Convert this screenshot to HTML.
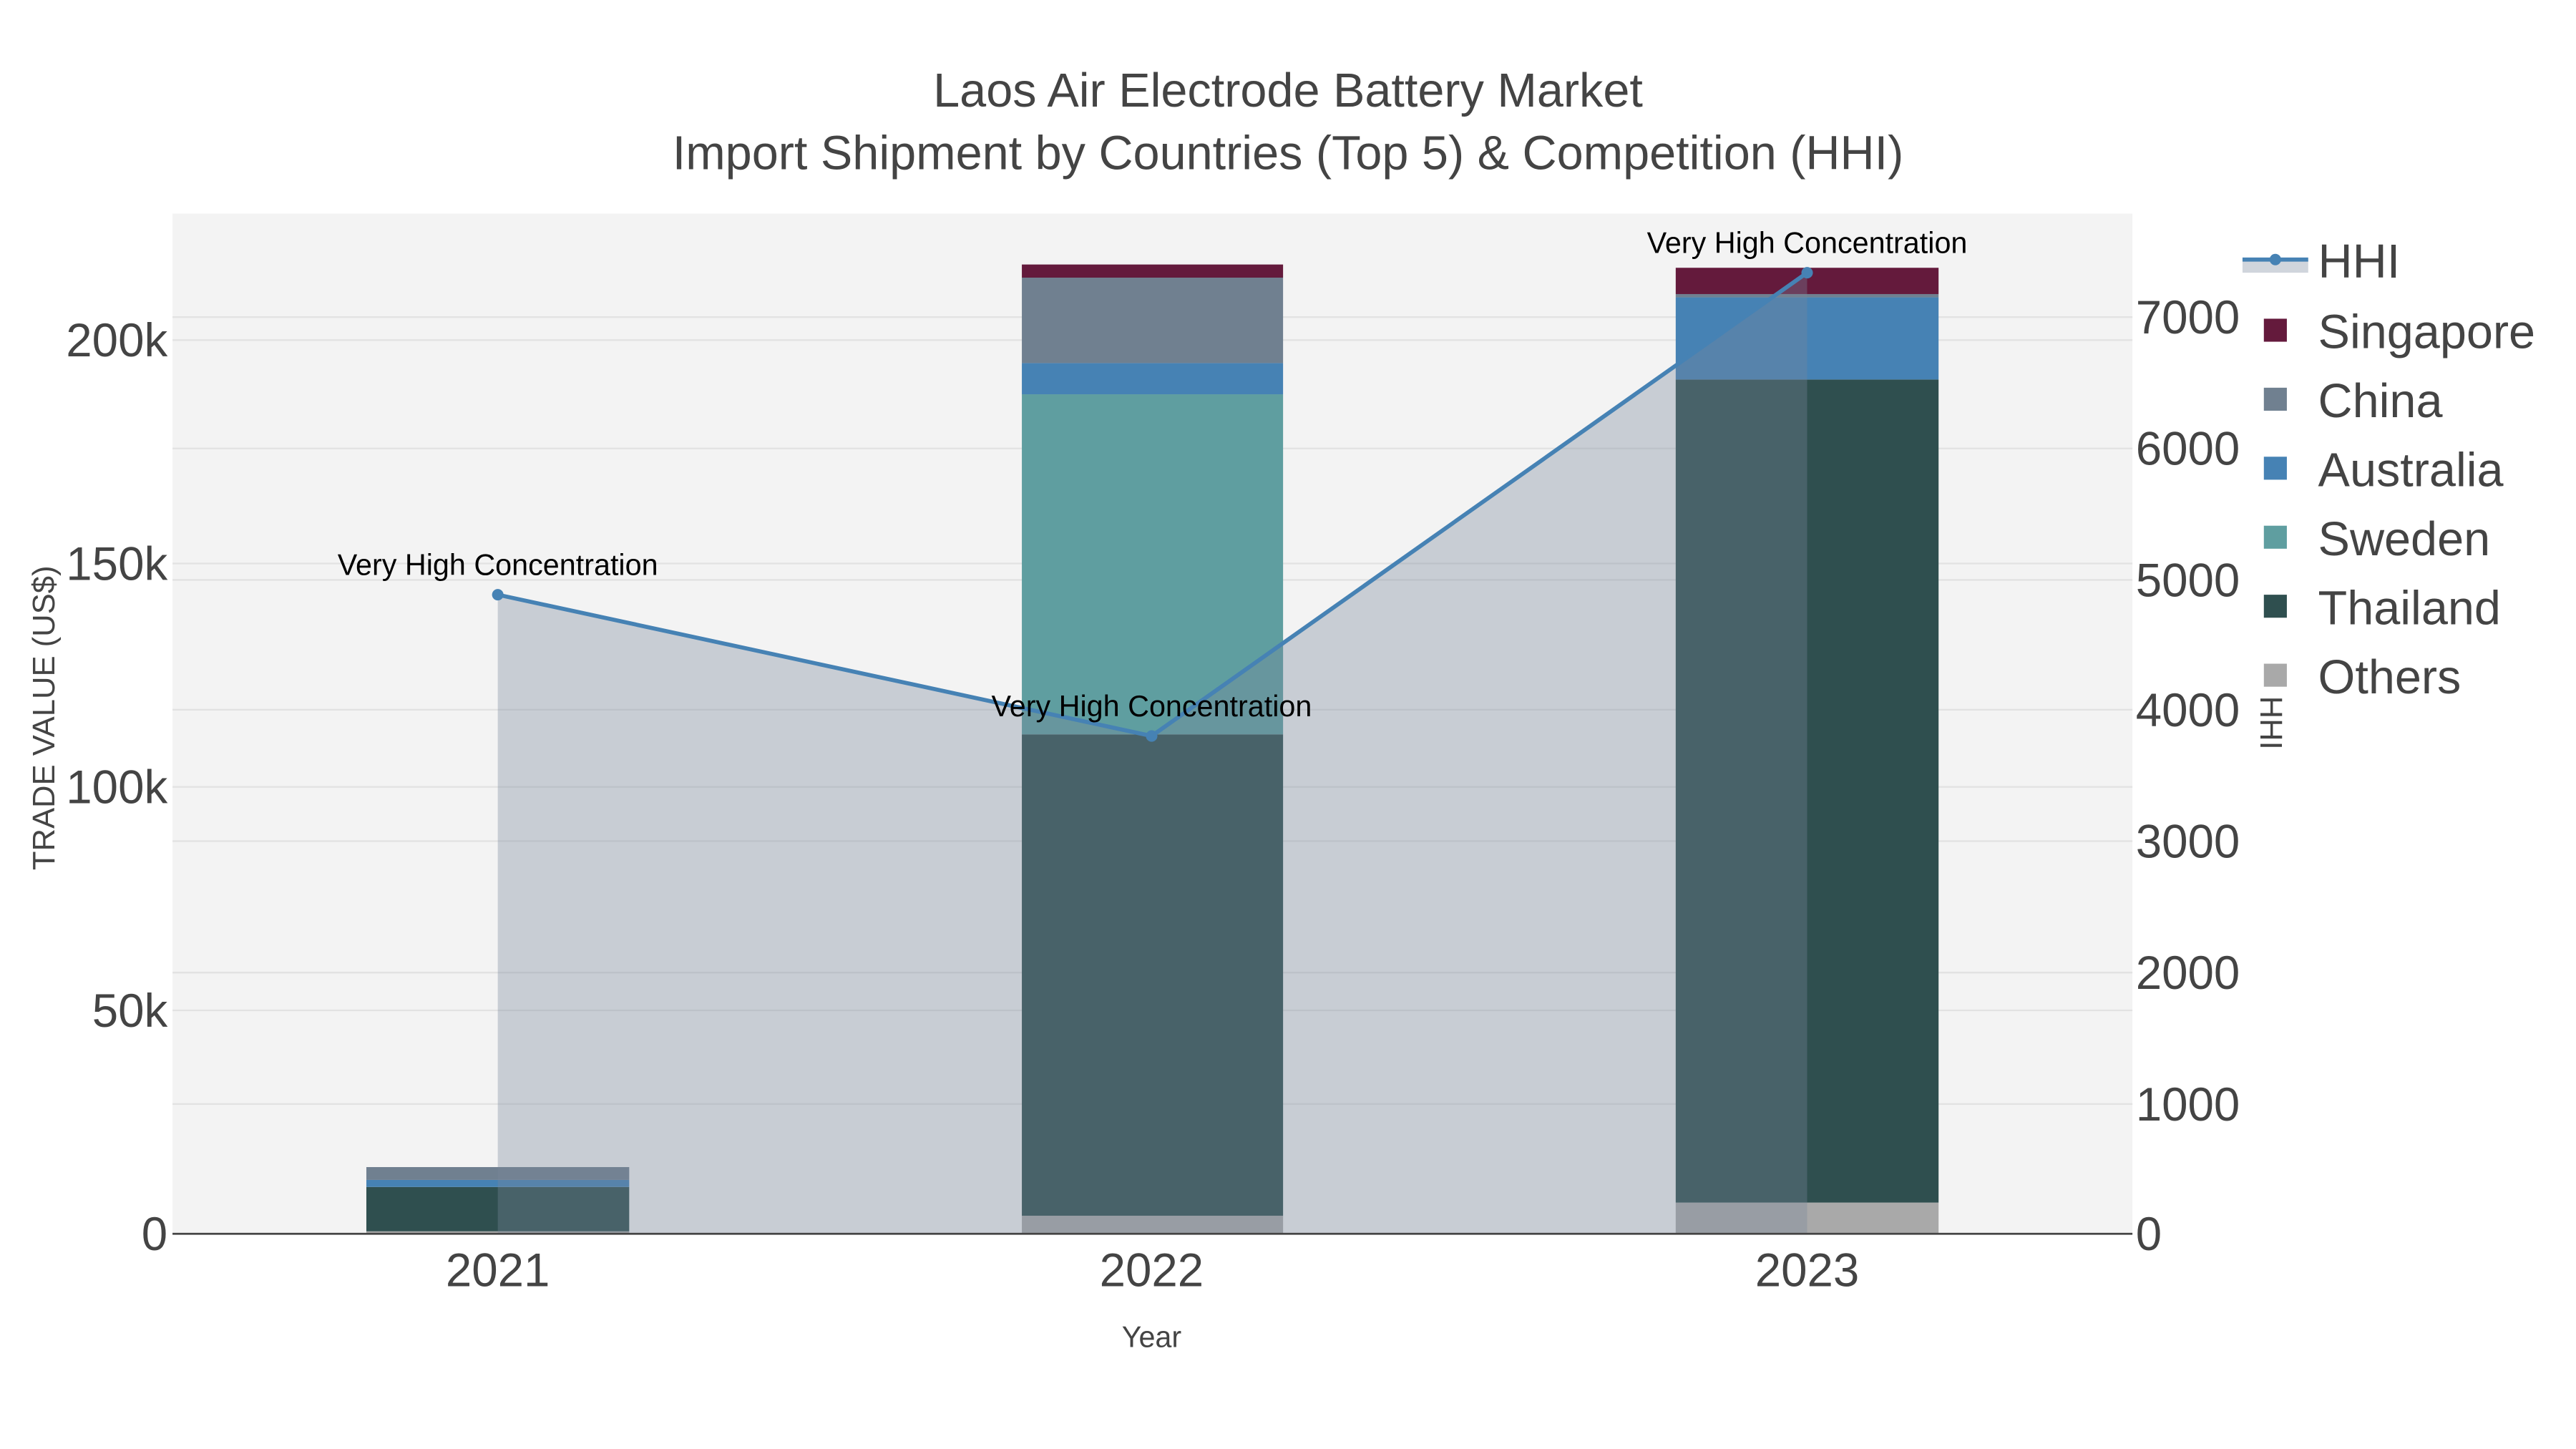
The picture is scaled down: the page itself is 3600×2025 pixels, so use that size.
<!DOCTYPE html>
<html><head><meta charset="utf-8"><style>html,body{margin:0;padding:0;background:#fff}svg{display:block}</style></head><body>
<svg width="3600" height="2025" viewBox="0 0 1568 882" preserveAspectRatio="none" xmlns="http://www.w3.org/2000/svg" font-family="Liberation Sans, sans-serif">
<rect width="1568" height="882" fill="#fff"/>
<rect x="105" y="130" width="1193" height="621" fill="#f3f3f3"/>
<g stroke="#e2e2e2" stroke-width="1">
<line x1="105" x2="1298" y1="615" y2="615"/><line x1="105" x2="1298" y1="479" y2="479"/><line x1="105" x2="1298" y1="343" y2="343"/><line x1="105" x2="1298" y1="207" y2="207"/>
<line x1="105" x2="1298" y1="672" y2="672"/><line x1="105" x2="1298" y1="592" y2="592"/><line x1="105" x2="1298" y1="512" y2="512"/><line x1="105" x2="1298" y1="432" y2="432"/><line x1="105" x2="1298" y1="353" y2="353"/><line x1="105" x2="1298" y1="273" y2="273"/><line x1="105" x2="1298" y1="193" y2="193"/>
</g>
<rect x="223" y="749.5" width="160" height="1.5" fill="#a9a9a9"/>
<rect x="223" y="722.5" width="160" height="27" fill="#2f4f4f"/>
<rect x="223" y="718.2" width="160" height="4.3" fill="#4682b4"/>
<rect x="223" y="710.4" width="160" height="7.8" fill="#708090"/>
<rect x="622" y="740" width="159" height="11" fill="#a9a9a9"/>
<rect x="622" y="447" width="159" height="293" fill="#2f4f4f"/>
<rect x="622" y="240" width="159" height="207" fill="#5f9ea0"/>
<rect x="622" y="221" width="159" height="19" fill="#4682b4"/>
<rect x="622" y="169" width="159" height="52" fill="#708090"/>
<rect x="622" y="161" width="159" height="8" fill="#641a3c"/>
<rect x="1020" y="732" width="160" height="19" fill="#a9a9a9"/>
<rect x="1020" y="231" width="160" height="501" fill="#2f4f4f"/>
<rect x="1020" y="181" width="160" height="50" fill="#4682b4"/>
<rect x="1020" y="179" width="160" height="2" fill="#708090"/>
<rect x="1020" y="163" width="160" height="16" fill="#641a3c"/>
<polygon points="303,362 701,448 1100,166 1100,751 303,751" fill="rgba(120,134,155,0.35)"/>
<polyline points="303,362 701,448 1100,166" fill="none" stroke="#4682b4" stroke-width="2.5"/>
<circle cx="303" cy="362" r="3.5" fill="#4682b4"/><circle cx="701" cy="448" r="3.5" fill="#4682b4"/><circle cx="1100" cy="166" r="3.5" fill="#4682b4"/>
<line x1="105" x2="1298" y1="751" y2="751" stroke="#444" stroke-width="1.2"/>
<g font-size="18" fill="#000" text-anchor="middle">
<text x="303" y="350">Very High Concentration</text><text x="701" y="436">Very High Concentration</text><text x="1100" y="154">Very High Concentration</text>
</g>
<g font-size="29" fill="#444" text-anchor="middle">
<text x="784" y="65">Laos Air Electrode Battery Market</text>
<text x="784" y="103">Import Shipment by Countries (Top 5) &amp; Competition (HHI)</text>
</g>
<g font-size="28.5" fill="#444" text-anchor="middle">
<text x="303" y="783">2021</text><text x="701" y="783">2022</text><text x="1100" y="783">2023</text>
</g>
<g font-size="28.5" fill="#444" text-anchor="end">
<text x="102" y="761">0</text><text x="102" y="625">50k</text><text x="102" y="489">100k</text><text x="102" y="353">150k</text><text x="102" y="217">200k</text>
</g>
<g font-size="28.5" fill="#444">
<text x="1300" y="761">0</text><text x="1300" y="682">1000</text><text x="1300" y="602">2000</text><text x="1300" y="522">3000</text><text x="1300" y="442">4000</text><text x="1300" y="363">5000</text><text x="1300" y="283">6000</text><text x="1300" y="203">7000</text>
</g>
<text x="701" y="820" font-size="18" fill="#444" text-anchor="middle">Year</text>
<text transform="translate(33,437) rotate(-90)" font-size="19" fill="#444" text-anchor="middle">TRADE VALUE (US$)</text>
<text transform="translate(1376,440) rotate(90)" font-size="19" fill="#444" text-anchor="middle">HHI</text>
<rect x="1365" y="158" width="40" height="8" fill="rgba(120,134,155,0.35)"/>
<line x1="1365" x2="1405" y1="158" y2="158" stroke="#4682b4" stroke-width="2.5"/><circle cx="1385" cy="158" r="3.5" fill="#4682b4"/>
<rect x="1378" y="194" width="14" height="14" fill="#641a3c"/>
<rect x="1378" y="236" width="14" height="14" fill="#708090"/>
<rect x="1378" y="278" width="14" height="14" fill="#4682b4"/>
<rect x="1378" y="320" width="14" height="14" fill="#5f9ea0"/>
<rect x="1378" y="362" width="14" height="14" fill="#2f4f4f"/>
<rect x="1378" y="404" width="14" height="14" fill="#a9a9a9"/>
<g font-size="29" fill="#444">
<text x="1411" y="169">HHI</text><text x="1411" y="212">Singapore</text><text x="1411" y="254">China</text><text x="1411" y="296">Australia</text><text x="1411" y="338">Sweden</text><text x="1411" y="380">Thailand</text><text x="1411" y="422">Others</text>
</g>
</svg>
</body></html>
